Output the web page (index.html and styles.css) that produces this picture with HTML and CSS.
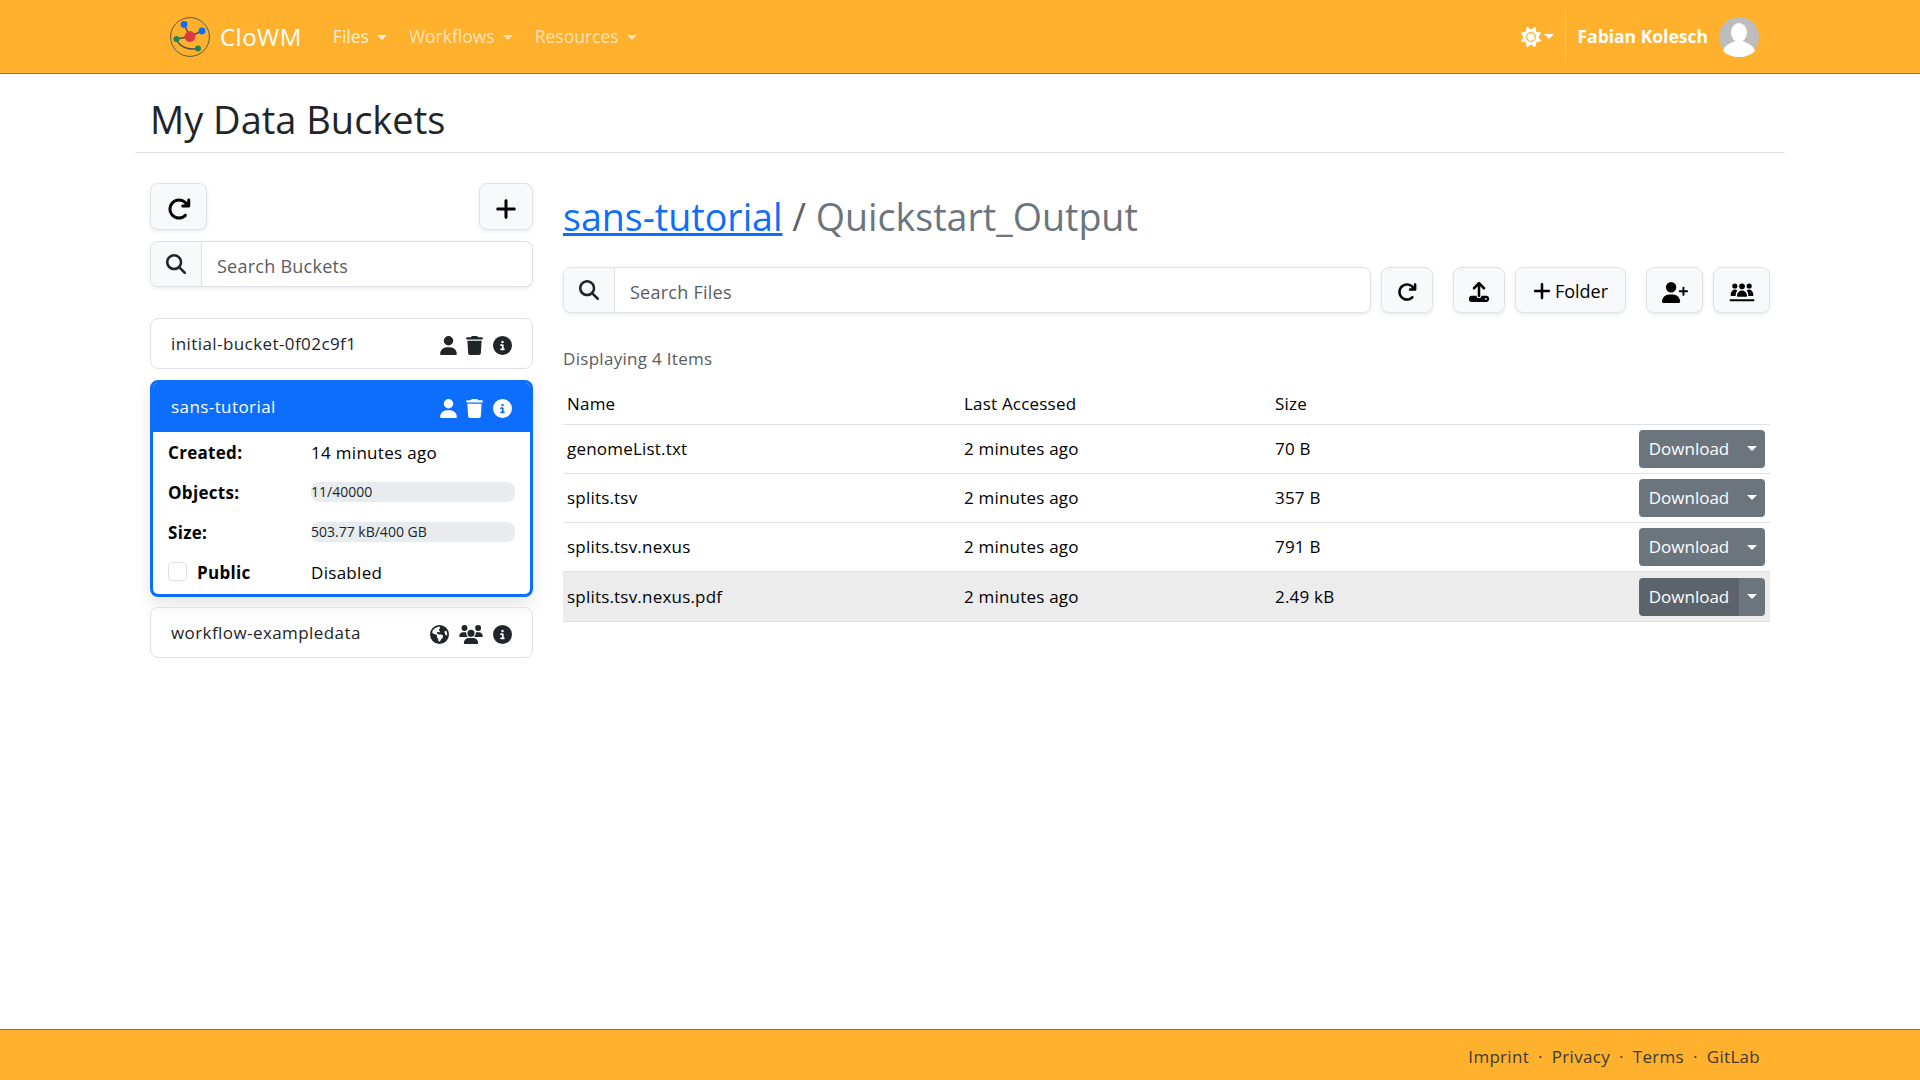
FILE: index.html
```html
<!DOCTYPE html>
<html lang="en">
<head>
  <meta charset="UTF-8">
  <title>CloWM - My Data Buckets</title>
  <link rel="stylesheet" href="styles.css">
</head>
<body>
  <svg class="icon-defs" width="0" height="0">
    <symbol id="i-refresh" viewBox="0 0 512 512"><path d="M386.3 160H336c-17.7 0-32 14.3-32 32s14.3 32 32 32H464c17.7 0 32-14.3 32-32V64c0-17.7-14.3-32-32-32s-32 14.3-32 32v51.2L414.4 97.6c-87.5-87.5-229.3-87.5-316.8 0s-87.5 229.3 0 316.8s229.3 87.5 316.8 0c12.5-12.5 12.5-32.8 0-45.3s-32.8-12.5-45.3 0c-62.5 62.5-163.8 62.5-226.3 0s-62.5-163.8 0-226.3s163.8-62.5 226.3 0L386.3 160z"/></symbol>
    <symbol id="i-plus" viewBox="0 0 448 512"><path d="M256 80c0-17.7-14.3-32-32-32s-32 14.3-32 32V224H48c-17.7 0-32 14.3-32 32s14.3 32 32 32H192V432c0 17.7 14.3 32 32 32s32-14.3 32-32V288H400c17.7 0 32-14.3 32-32s-14.3-32-32-32H256V80z"/></symbol>
    <symbol id="i-search" viewBox="0 0 512 512"><path d="M416 208c0 45.9-14.9 88.3-40 122.7L502.6 457.4c12.5 12.5 12.5 32.8 0 45.3s-32.8 12.5-45.3 0L330.7 376c-34.4 25.2-76.8 40-122.7 40C93.1 416 0 322.9 0 208S93.1 0 208 0S416 93.1 416 208zM208 352a144 144 0 1 0 0-288 144 144 0 1 0 0 288z"/></symbol>
    <symbol id="i-user" viewBox="0 0 448 512"><path d="M224 256A128 128 0 1 0 224 0a128 128 0 1 0 0 256zm-45.7 48C79.8 304 0 383.8 0 482.3C0 498.7 13.3 512 29.7 512H418.3c16.4 0 29.7-13.3 29.7-29.7C448 383.8 368.2 304 269.7 304H178.3z"/></symbol>
    <symbol id="i-trash" viewBox="0 0 448 512"><path d="M135.2 17.7L128 32H32C14.3 32 0 46.3 0 64S14.3 96 32 96H416c17.7 0 32-14.3 32-32s-14.3-32-32-32H320l-7.2-14.3C307.4 6.8 296.3 0 284.2 0H163.8c-12.1 0-23.2 6.8-28.6 17.7zM416 128H32L53.2 467c1.6 25.3 22.6 45 47.9 45H346.9c25.3 0 46.3-19.7 47.9-45L416 128z"/></symbol>
    <symbol id="i-info" viewBox="0 0 512 512"><path d="M256 512A256 256 0 1 0 256 0a256 256 0 1 0 0 512zM216 336h24V272H216c-13.3 0-24-10.7-24-24s10.7-24 24-24h48c13.3 0 24 10.7 24 24v88h8c13.3 0 24 10.7 24 24s-10.7 24-24 24H216c-13.3 0-24-10.7-24-24s10.7-24 24-24zm40-208a32 32 0 1 1 0 64 32 32 0 1 1 0-64z"/></symbol>
    <symbol id="i-users" viewBox="0 0 640 512"><path d="M144 0a80 80 0 1 1 0 160A80 80 0 1 1 144 0zM512 0a80 80 0 1 1 0 160A80 80 0 1 1 512 0zM0 298.7C0 239.8 47.8 192 106.7 192h42.7c15.9 0 31 3.5 44.6 9.7c-1.3 7.2-1.9 14.7-1.9 22.3c0 38.2 16.8 72.5 43.3 96c-.2 0-.4 0-.7 0H21.3C9.6 320 0 310.4 0 298.7zM405.3 320c-.2 0-.4 0-.7 0c26.6-23.5 43.3-57.8 43.3-96c0-7.6-.7-15-1.9-22.3c13.6-6.3 28.7-9.7 44.6-9.7h42.7C592.2 192 640 239.8 640 298.7c0 11.8-9.6 21.3-21.3 21.3H405.3zM224 224a96 96 0 1 1 192 0 96 96 0 1 1 -192 0zM128 485.3C128 411.7 187.7 352 261.3 352H378.7C452.3 352 512 411.7 512 485.3c0 14.7-11.9 26.7-26.7 26.7H154.7c-14.7 0-26.7-11.9-26.7-26.7z"/></symbol>
    <symbol id="i-earth" viewBox="0 0 512 512"><path d="M57.7 193l9.4 16.4c8.3 14.5 21.9 25.2 38 29.8L163 255.7c17.2 4.9 29 20.6 29 38.5v39.9c0 11 6.2 21 16 25.9s16 14.9 16 25.9v39c0 15.6 14.9 26.9 29.9 22.6c16.1-4.6 28.6-17.5 32.7-33.8l2.8-11.2c4.2-16.9 15.2-31.4 30.3-40l8.1-4.6c15-8.5 24.2-24.5 24.2-41.7v-8.3c0-12.7-5.1-24.9-14.1-33.9l-3.9-3.9c-9-9-21.2-14.1-33.9-14.1H257c-11.1 0-22.1-2.9-31.8-8.4l-34.5-19.7c-4.3-2.5-7.6-6.5-9.2-11.2c-3.2-9.6 1.1-20 10.2-24.5l5.9-3c6.6-3.3 14.3-3.9 21.3-1.5l23.2 7.7c8.2 2.7 17.2-.4 21.9-7.5c4.7-7 4.2-16.3-1.2-22.8l-13.6-16.3c-10-12-9.9-29.5 .3-41.3l15.7-18.3c8.8-10.3 10.2-25 3.5-36.7l-2.4-4.2c-3.5-.2-6.9-.3-10.4-.3C163.1 48 84.4 108.9 57.7 193zM464 256c0-36.8-9.6-71.4-26.4-101.5L412 164.8c-15.7 6.3-23.8 23.8-18.5 39.8l16.9 50.7c3.5 10.4 12 18.3 22.6 20.9l29.1 7.3c1.2-9 1.8-18.2 1.8-27.5zM0 256a256 256 0 1 1 512 0A256 256 0 1 1 0 256z"/></symbol>
  </svg>

  <nav class="navbar">
    <a class="brand" href="#">
      <svg class="logo" viewBox="0 0 40 40">
        <circle cx="20" cy="20" r="19.4" fill="none" stroke="#5a5a50" stroke-width="1"/>
        <path d="M14 7.5 L20 19.5 L32 14 M20 19.5 L6 22 C10 31 20 33 28 31.5" fill="none" stroke="#4a4f50" stroke-width="1.5"/>
        <circle cx="14" cy="7.5" r="3.4" fill="#0d6efd"/>
        <circle cx="32" cy="14" r="3.4" fill="#0d6efd"/>
        <circle cx="6.5" cy="22" r="3" fill="#198754"/>
        <circle cx="28" cy="31.5" r="3" fill="#198754"/>
        <circle cx="20" cy="19.5" r="5.4" fill="#dc3545"/>
      </svg>
      <span>CloWM</span>
    </a>
    <a class="nav-link nav-link-first caret" href="#">Files</a>
    <a class="nav-link caret" href="#">Workflows</a>
    <a class="nav-link caret" href="#">Resources</a>
    <div class="nav-right">
      <a class="theme-toggle caret" href="#"><svg class="sun" viewBox="0 0 512 512"><path d="M361.5 1.2c5 2.1 8.6 6.6 9.6 11.9L391 121l107.9 19.8c5.3 1 9.8 4.6 11.9 9.6s1.5 10.7-1.6 15.2L446.9 256l62.3 90.3c3.1 4.5 3.7 10.2 1.6 15.2s-6.6 8.6-11.9 9.6L391 391 371.1 498.9c-1 5.3-4.6 9.8-9.6 11.9s-10.7 1.5-15.2-1.6L256 446.9l-90.3 62.3c-4.5 3.1-10.2 3.7-15.2 1.6s-8.6-6.6-9.6-11.9L121 391 13.1 371.1c-5.3-1-9.8-4.6-11.9-9.6s-1.5-10.7 1.6-15.2L65.1 256 2.8 165.7c-3.1-4.5-3.7-10.2-1.6-15.2s6.6-8.6 11.9-9.6L121 121 140.9 13.1c1-5.3 4.6-9.8 9.6-11.9s10.7-1.5 15.2 1.6L256 65.1 346.3 2.8c4.5-3.1 10.2-3.7 15.2-1.6zM160 256a96 96 0 1 1 192 0 96 96 0 1 1 -192 0zm224 0a128 128 0 1 0 -256 0 128 128 0 1 0 256 0z"/></svg></a>
      <div class="nav-divider"></div>
      <span class="user-name">Fabian Kolesch</span>
      <svg class="avatar" viewBox="0 0 40 40">
        <circle cx="20" cy="20" r="20" fill="#bdbdbd"/>
        <ellipse cx="20" cy="15.5" rx="8" ry="9.5" fill="#fff"/>
        <path d="M4 34 C6 27 13 26 16 24 L24 24 C27 26 34 27 36 34 C32 38 26 40 20 40 C14 40 8 38 4 34 Z" fill="#fff"/>
      </svg>
    </div>
  </nav>

  <main class="container">
    <h1 class="page-title">My Data Buckets</h1>
    <div class="columns">
      <aside class="sidebar">
        <div class="sidebar-actions">
          <button class="btn btn-icon btn-lg"><svg class="i24"><use href="#i-refresh"/></svg></button>
          <button class="btn btn-icon btn-lg"><svg class="i24"><use href="#i-plus"/></svg></button>
        </div>
        <div class="search sidebar-search">
          <span class="search-addon"><svg class="i20"><use href="#i-search"/></svg></span>
          <span class="search-input">Search Buckets</span>
        </div>
        <ul class="bucket-list">
          <li class="bucket">
            <div class="bucket-head">
              <span class="bucket-name">initial-bucket-0f02c9f1</span>
              <svg class="bi bi-user"><use href="#i-user"/></svg>
              <svg class="bi bi-trash"><use href="#i-trash"/></svg>
              <svg class="bi bi-info"><use href="#i-info"/></svg>
            </div>
          </li>
          <li class="bucket bucket-active">
            <div class="bucket-head">
              <span class="bucket-name">sans-tutorial</span>
              <svg class="bi bi-user"><use href="#i-user"/></svg>
              <svg class="bi bi-trash"><use href="#i-trash"/></svg>
              <svg class="bi bi-info"><use href="#i-info"/></svg>
            </div>
            <div class="bucket-body">
              <b>Created:</b><span>14 minutes ago</span>
              <b>Objects:</b><div class="progress">11/40000</div>
              <b>Size:</b><div class="progress">503.77 kB/400 GB</div>
              <div class="public"><span class="checkbox"></span><b>Public</b></div><span>Disabled</span>
            </div>
          </li>
          <li class="bucket">
            <div class="bucket-head">
              <span class="bucket-name">workflow-exampledata</span>
              <svg class="bi bi-earth"><use href="#i-earth"/></svg>
              <svg class="bi bi-users"><use href="#i-users"/></svg>
              <svg class="bi bi-info"><use href="#i-info"/></svg>
            </div>
          </li>
        </ul>
      </aside>

      <section class="content">
        <h2 class="crumbs"><a href="#">sans-tutorial</a> <span class="crumb-sep">/</span> <span class="crumb-current">Quickstart_Output</span></h2>
        <div class="toolbar">
          <div class="search file-search">
            <span class="search-addon"><svg class="i20"><use href="#i-search"/></svg></span>
            <span class="search-input">Search Files</span>
          </div>
          <button class="btn btn-icon btn-refresh"><svg class="i20"><use href="#i-refresh"/></svg></button>
          <button class="btn btn-icon btn-upload"><svg class="i20" viewBox="0 0 512 512"><path d="M288 109.3V352c0 17.7-14.3 32-32 32s-32-14.3-32-32V109.3l-73.4 73.4c-12.5 12.5-32.8 12.5-45.3 0s-12.5-32.8 0-45.3l128-128c12.5-12.5 32.8-12.5 45.3 0l128 128c12.5 12.5 12.5 32.8 0 45.3s-32.8 12.5-45.3 0L288 109.3zM64 352H192c0 35.3 28.7 64 64 64s64-28.7 64-64H448c35.3 0 64 28.7 64 64v32c0 35.3-28.7 64-64 64H64c-35.3 0-64-28.7-64-64V416c0-35.3 28.7-64 64-64zM432 456a24 24 0 1 0 0-48 24 24 0 1 0 0 48z"/></svg></button>
          <button class="btn btn-folder"><svg class="i-folder-plus"><use href="#i-plus"/></svg>Folder</button>
          <button class="btn btn-icon btn-adduser"><svg class="i-adduser" viewBox="0 0 640 512"><path d="M96 128a128 128 0 1 1 256 0A128 128 0 1 1 96 128zM0 482.3C0 383.8 79.8 304 178.3 304h91.4C368.2 304 448 383.8 448 482.3c0 16.4-13.3 29.7-29.7 29.7H29.7C13.3 512 0 498.7 0 482.3zM504 312V248H440c-13.3 0-24-10.7-24-24s10.7-24 24-24h64V136c0-13.3 10.7-24 24-24s24 10.7 24 24v64h64c13.3 0 24 10.7 24 24s-10.7 24-24 24H552v64c0 13.3-10.7 24-24 24s-24-10.7-24-24z"/></svg></button>
          <button class="btn btn-icon btn-group"><svg class="i-group" viewBox="0 0 640 512"><path d="M144 32a64 64 0 1 1 0 128 64 64 0 1 1 0-128zM496 32a64 64 0 1 1 0 128 64 64 0 1 1 0-128zM320 32a72 72 0 1 1 0 144 72 72 0 1 1 0-144zM40 330c0-70 40-146 104-146 25 0 46 10 62 26-26 25-42 64-42 120v12H60c-11 0-20-6-20-12zM600 330c0 6-9 12-20 12H476v-12c0-56-16-95-42-120 16-16 37-26 62-26 64 0 104 76 104 146zM196 342c0-70 50-138 124-138s124 68 124 138c0 10-9 18-20 18H216c-11 0-20-8-20-18zM40 424h560c13 0 24 11 24 24s-11 24-24 24H40c-13 0-24-11-24-24s11-24 24-24z"/></svg></button>
        </div>
        <p class="item-count">Displaying 4 Items</p>
        <table class="file-table">
          <colgroup><col class="col-name"><col class="col-access"><col class="col-size"><col></colgroup>
          <thead>
            <tr><th>Name</th><th>Last Accessed</th><th>Size</th><th></th></tr>
          </thead>
          <tbody>
            <tr>
              <td>genomeList.txt</td><td>2 minutes ago</td><td>70 B</td>
              <td class="cell-action"><div class="btn-split"><a class="split-main" href="#">Download</a><a class="split-caret caret" href="#"></a></div></td>
            </tr>
            <tr>
              <td>splits.tsv</td><td>2 minutes ago</td><td>357 B</td>
              <td class="cell-action"><div class="btn-split"><a class="split-main" href="#">Download</a><a class="split-caret caret" href="#"></a></div></td>
            </tr>
            <tr>
              <td>splits.tsv.nexus</td><td>2 minutes ago</td><td>791 B</td>
              <td class="cell-action"><div class="btn-split"><a class="split-main" href="#">Download</a><a class="split-caret caret" href="#"></a></div></td>
            </tr>
            <tr class="row-hover">
              <td>splits.tsv.nexus.pdf</td><td>2 minutes ago</td><td>2.49 kB</td>
              <td class="cell-action"><div class="btn-split"><a class="split-main" href="#">Download</a><a class="split-caret caret" href="#"></a></div></td>
            </tr>
          </tbody>
        </table>
      </section>
    </div>
  </main>

  <footer class="footer">
    <a href="#">Imprint</a><span class="dot">·</span><a href="#">Privacy</a><span class="dot">·</span><a href="#">Terms</a><span class="dot">·</span><a href="#">GitLab</a>
  </footer>
</body>
</html>
```

FILE: styles.css
```css
* { box-sizing: border-box; }
html, body { height: 100%; }
body { margin: 0; display: flex; flex-direction: column; font-family: "Open Sans", "Noto Sans", sans-serif; font-size: 17px; line-height: 24px; letter-spacing: .3px; color: #212529; background: #fff; }
a { text-decoration: none; color: inherit; }
svg { fill: currentColor; display: block; }
.icon-defs { position: absolute; }

.caret::after { content: ""; display: inline-block; margin-left: 8px; vertical-align: 3px; border-top: 5px solid currentColor; border-left: 5px solid transparent; border-right: 5px solid transparent; }

.navbar { height: 74px; flex: none; display: flex; align-items: center; padding: 0 161px 0 170px; background: #ffb12e; border-bottom: 1px solid #6c757d; letter-spacing: 0; }
.brand { display: flex; align-items: center; gap: 10px; color: #fff; font-size: 24px; letter-spacing: .5px; }
.logo { width: 40px; height: 40px; }
.nav-link { color: rgba(255, 255, 255, .65); margin: 0 0 2px 22px; font-size: 17.5px; }
.nav-link-first { margin-left: 31px; color: rgba(255, 255, 255, .8); }
.nav-right { margin-left: auto; display: flex; align-items: center; }
.theme-toggle { display: flex; align-items: center; color: #fff; }
.theme-toggle::after { margin-left: 3px; vertical-align: 0; }
.sun { width: 20px; height: 20px; }
.nav-divider { width: 1px; height: 53px; margin: 0 11px 0 11px; background: rgba(255, 255, 255, .3); }
.user-name { color: #fff; font-weight: 700; font-size: 17.5px; margin: 0 11px 1px 0; }
.avatar { width: 40px; height: 40px; }

.container { flex: 1; width: 1650px; margin: 0 auto; }
.page-title { margin: 0; height: 79px; padding: 21px 15px 0; font-size: 38px; line-height: 48px; font-weight: 400; letter-spacing: 0; border-bottom: 1px solid #dee2e6; }
.columns { display: flex; gap: 30px; padding: 30px 15px 0; }
.sidebar { width: 383px; flex: none; }
.content { flex: 1; min-width: 0; }

.btn { display: flex; align-items: center; justify-content: center; padding: 0; height: 46px; font: inherit; letter-spacing: 0; color: #000; background: #f8f9fa; border: 1px solid #dee2e6; border-radius: 8px; box-shadow: 0 2px 4px rgba(0, 0, 0, .075); }
.btn-icon { padding-top: 4px; }
.btn-lg { width: 57px; height: 47px; }
.i24 { width: 24px; height: 24px; }
.i20 { width: 20px; height: 20px; }

.sidebar-actions { display: flex; justify-content: space-between; }
.sidebar-actions .btn:last-child { width: 54px; }
.search { display: flex; height: 46px; background: #fff; border: 1px solid #dee2e6; border-radius: 8px; box-shadow: 0 2px 4px rgba(0, 0, 0, .075); overflow: hidden; }
.sidebar-search { margin-top: 11px; }
.search-addon { width: 51px; flex: none; display: flex; align-items: center; justify-content: center; background: #f8f9fa; border-right: 1px solid #dee2e6; color: #212529; }
.search-input { flex: 1; padding: 2px 0 0 15px; font-size: 18px; letter-spacing: .25px; line-height: 44px; color: #595c5f; }

.bucket-list { list-style: none; margin: 31px 0 0; padding: 0; display: flex; flex-direction: column; gap: 10px; }
.bucket { border: 1px solid #dee2e6; border-radius: 8px; overflow: hidden; }
.bucket-head { height: 49px; display: flex; align-items: center; padding: 0 20px; }
.bucket-name { flex: 1; padding-top: 1px; letter-spacing: .42px; }
.bi { height: 19px; margin: 4px 0 0 9px; }
.bi-user, .bi-trash { width: 17px; }
.bi-info, .bi-earth { width: 19px; }
.bi-info, .bi-users { margin-left: 10px; }
.bi-users { width: 24px; }
.bucket-active { margin-top: 1px; border: 3px solid #0d6efd; box-shadow: 0 8px 16px rgba(0, 0, 0, .1); }
.bucket-active .bucket-head { height: 49px; padding: 0 18px 2px; background: #0d6efd; color: #fff; }
.bucket-body { display: grid; grid-template-columns: 143px 204px; grid-auto-rows: 40px; align-items: center; padding: 0 0 0 15px; color: #000; height: 162px; align-content: start; }
.bucket-body > b, .bucket-body > span, .public b { padding-top: 2px; }
.progress { height: 20px; line-height: 20px; font-size: 14px; letter-spacing: 0; background: #e9ecef; border-radius: 8px; color: #212529; }
.public { display: flex; align-items: center; gap: 10px; }
.checkbox { width: 19px; height: 19px; margin-top: -2px; background: #fff; border: 1px solid #dee2e6; border-radius: 4px; }

.crumbs { margin: 10px 0 0; font-size: 37.6px; line-height: 48px; font-weight: 400; letter-spacing: 0; color: #6c757d; }
.crumbs a { color: #0d6efd; text-decoration: underline; }
.crumb-sep { color: #5f6368; }

.toolbar { display: flex; margin-top: 26px; }
.file-search { flex: 1; }
.btn-refresh { width: 52px; margin-left: 10px; }
.btn-upload { width: 52px; margin-left: 20px; }
.btn-folder { width: 111px; margin-left: 10px; gap: 4px; padding-top: 2px; font-size: 18px; }
.i-folder-plus { width: 18px; height: 20px; }
.btn-adduser { width: 57px; margin-left: 20px; }
.btn-group { width: 57px; margin-left: 10px; }
.i-adduser { width: 26px; height: 21px; }
.i-group { width: 26px; height: 21px; }

.item-count { margin: 34px 0 0; color: #595c5f; }
.file-table { width: 100%; margin-top: 9px; border-collapse: collapse; table-layout: fixed; color: #000; }
.col-name { width: 397px; }
.col-access { width: 311px; }
.col-size { width: 200px; }
.file-table th { height: 44px; padding: 4px 4px 0; text-align: left; font-weight: 400; letter-spacing: .2px; border-bottom: 1px solid #dee2e6; }
.file-table td { height: 49.3px; padding: 0 4px; letter-spacing: .2px; border-bottom: 1px solid #dee2e6; }
.file-table .cell-action { padding-right: 5px; letter-spacing: 0; }
.row-hover td { background: #ececec; }
.btn-split { display: flex; justify-content: flex-end; color: #fff; }
.split-main { width: 100px; height: 38px; display: flex; align-items: center; justify-content: center; background: #6c757d; border-radius: 4px 0 0 4px; }
.split-caret { width: 26px; height: 38px; display: flex; align-items: center; justify-content: center; background: #6c757d; border-radius: 0 4px 4px 0; }
.split-caret::after { margin-left: 0; }
.row-hover .split-main { background: #5c636a; }

.footer { height: 51px; flex: none; display: flex; align-items: center; justify-content: flex-end; padding: 3px 160px 0 0; background: #ffb12e; border-top: 1px solid #6c757d; color: #3d3a30; }
.dot { margin: 0 9px; }
```
